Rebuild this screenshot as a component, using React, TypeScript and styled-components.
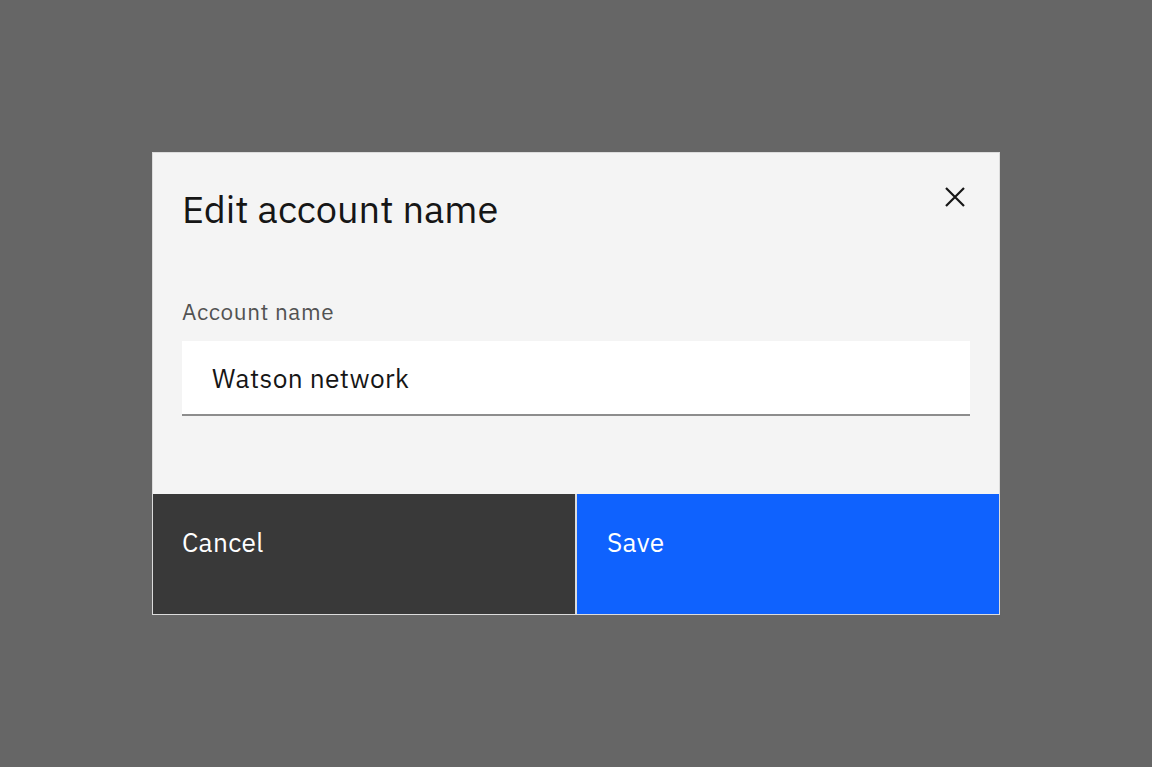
import styled, { createGlobalStyle } from "styled-components";

const GlobalStyle = createGlobalStyle`
  html, body {
    margin: 0;
    padding: 0;
    background: #666666;
    font-family: "IBM Plex Sans", Inter, "Noto Sans", sans-serif;
  }
`;

const Overlay = styled.div`
  width: 1152px;
  height: 767px;
  display: flex;
  align-items: flex-start;
  justify-content: center;
  padding-top: 152px;
  box-sizing: border-box;
`;

const Modal = styled.div`
  width: 848px;
  height: 463px;
  box-sizing: border-box;
  border: 1px solid #dcdcdc;
  background: #f4f4f4;
  display: flex;
  flex-direction: column;
`;

const Header = styled.div`
  display: flex;
  justify-content: space-between;
  align-items: flex-start;
`;

const Title = styled.h2`
  margin: 0;
  padding: 34px 30px 0 29px;
  font-size: 38px;
  font-weight: 400;
  line-height: 44px;
  color: #161616;
`;

const CloseButton = styled.button`
  width: 88px;
  height: 88px;
  border: none;
  background: transparent;
  padding: 0;
  display: flex;
  align-items: center;
  justify-content: center;
  cursor: pointer;
`;

const Body = styled.div`
  padding: 56px 29px 0 30px;
  display: flex;
  flex-direction: column;
`;

const Label = styled.label`
  font-size: 22.5px;
  line-height: 30px;
  color: #525252;
  letter-spacing: 0.6px;
  margin-bottom: 14px;
  margin-left: -1px;
`;

const Input = styled.input`
  height: 75px;
  box-sizing: border-box;
  border: none;
  border-bottom: 2px solid #8d8d8d;
  background: #ffffff;
  padding: 0 30px;
  margin-left: -1px;
  font-family: inherit;
  font-size: 26.25px;
  letter-spacing: 0.4px;
  color: #161616;
  outline: none;
`;

const Footer = styled.div`
  margin-top: auto;
  height: 120px;
  display: grid;
  grid-template-columns: 1fr 1fr;
  gap: 2px;
  background: #dcdcdc;
`;

const FooterButton = styled.button<{ $primary?: boolean }>`
  border: none;
  margin: 0;
  background: ${(p) => (p.$primary ? "#0f62fe" : "#393939")};
  color: #ffffff;
  font-family: inherit;
  font-size: 26.25px;
  letter-spacing: 0.3px;
  line-height: 34px;
  text-align: left;
  display: flex;
  align-items: flex-start;
  padding: 31px 30px 0 ${(p) => (p.$primary ? "30px" : "29px")};
  cursor: pointer;
`;

export default function App() {
  return (
    <>
      <GlobalStyle />
      <Overlay>
        <Modal>
          <Header>
            <Title>Edit account name</Title>
            <CloseButton aria-label="Close">
              <svg width="22" height="22" viewBox="0 0 22 22">
                <path d="M2 2 L20 20 M20 2 L2 20" stroke="#161616" strokeWidth="2.2" />
              </svg>
            </CloseButton>
          </Header>
          <Body>
            <Label htmlFor="account">Account name</Label>
            <Input id="account" defaultValue="Watson network" />
          </Body>
          <Footer>
            <FooterButton>Cancel</FooterButton>
            <FooterButton $primary>Save</FooterButton>
          </Footer>
        </Modal>
      </Overlay>
    </>
  );
}
